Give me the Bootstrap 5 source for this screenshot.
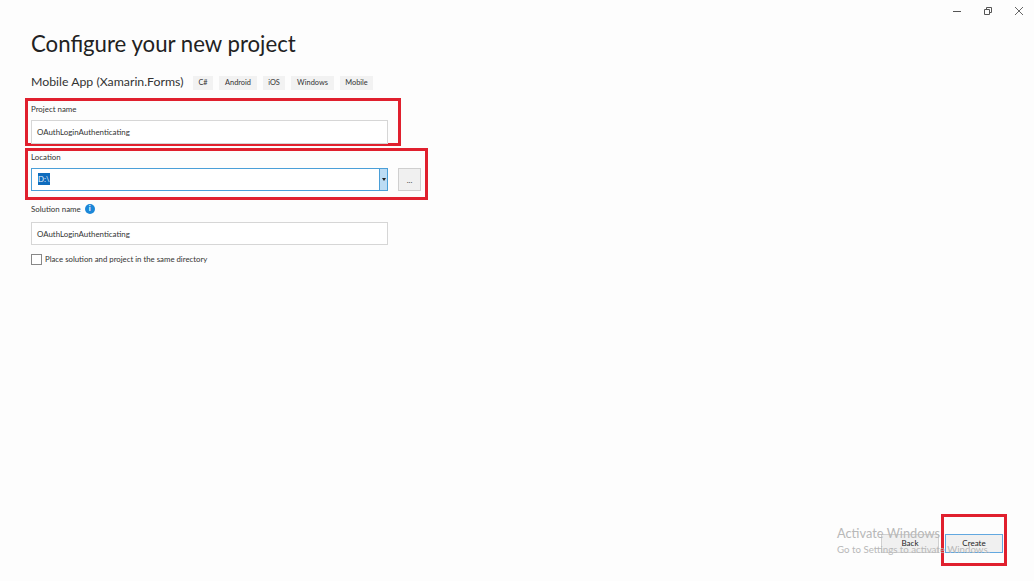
<!DOCTYPE html>
<html lang="en">
<head>
  <meta charset="UTF-8">
  <meta name="viewport" content="width=device-width, initial-scale=1.0">
  <title>Configure your new project</title>
  <link rel="stylesheet" href="https://cdn.jsdelivr.net/npm/bootstrap@5.3.0/dist/css/bootstrap.min.css">
  <style>
    html, body { height: 100%; overflow: hidden; }
    body { background: #fdfdfd; color: #222; font-family: "Lato", "Noto Sans", sans-serif; font-size: 7.9px; }
    .page-wrap { height: 581px; position: relative; }
    .win-controls { height: 22px; padding-right: 7px; gap: 15px; }
    .win-btn { width: 16px; height: 22px; }
    .main-col { padding-left: 25px; }
    .page-title { font-size: 22.2px; font-weight: 400; line-height: 30px; margin: 7px 0 0 6px; color: #222; }
    .template-row { margin: 14px 0 0 6px; height: 18px; padding-top: 1px; }
    .template-name { font-size: 12.3px; color: #333; width: 162px; white-space: nowrap; }
    .tag-chip { background: #f2f2f2; color: #333; font-size: 7.4px; height: 14px; line-height: 14px; text-align: center; margin-right: 6px; white-space: nowrap; }
    .chip-cs { width: 20px; }
    .chip-android { width: 38px; }
    .chip-ios { width: 22px; }
    .chip-windows { width: 43px; }
    .chip-mobile { width: 33px; }
    .red-box { border: 3px solid #e0202e; }
    .name-box { width: 376px; height: 48px; margin-top: 7px; padding: 1px 0 0 3px; }
    .loc-box { width: 403px; height: 52px; margin-top: 2px; padding: 0 0 0 3px; }
    .field-label { font-size: 7.9px; line-height: 14px; color: #333; }
    .vs-input { width: 357px; height: 23px; border: 1px solid #d6d6d6; background: #fff; font-size: 7.9px; line-height: 22px; padding-left: 5px; color: #333; }
    .name-box .field-label { margin-bottom: 4px; }
    .name-box .vs-input { height: 24px; line-height: 23px; }
    .loc-box .field-label { line-height: 12px; margin-bottom: 5px; }
    .loc-combo { width: 357px; height: 23px; border: 1px solid #4a9fd8; background: #fff; }
    .loc-text { padding-left: 6px; font-size: 7.9px; line-height: 21px; }
    .loc-sel { background: #0f6cbd; color: #e8f2fa; padding: 1px 0; line-height: 11px; }
    .loc-arrow { width: 8px; background: #bcdcf4; border-left: 1px solid #4a9fd8; }
    .loc-arrow span { border: 2px solid transparent; border-top: 3px solid #222; border-bottom: 0; }
    .browse-btn { width: 23px; height: 23px; margin-left: 10px; border: 1px solid #cfcfcf; background: #f0f0f0; font-size: 8px; color: #444; padding: 0; }
    .plain-field { padding-left: 31px; }
    .solution-label { margin-top: 1px; height: 16px; gap: 4px; margin-bottom: 5px; }
    .info-dot { width: 10px; height: 10px; border-radius: 50%; background: #1b87d8; color: #fff; font-size: 7.5px; line-height: 10px; font-weight: 700; text-align: center; }
    .check-row { margin-top: 8px; gap: 3px; font-size: 7.8px; color: #333; height: 12px; }
    .check-text { padding-top: 2px; }
    .vs-check { width: 11px; height: 11px; border: 1px solid #888; background: #fff; }
    .footer-row { position: absolute; right: 27px; bottom: 15px; align-items: flex-end; }
    .vs-btn { width: 58px; height: 19px; font-size: 8px; line-height: 17px; color: #222; background: #f0f0f0; border: 1px solid #d0d0d0; padding: 0; border-radius: 0; }
    .back-btn { margin-bottom: 13px; margin-right: 2px; }
    .create-box { width: 66px; height: 52px; padding: 17px 0 0 1px; }
    .create-btn { border-color: #62a8e0; width: 58px; }
    .activate-mark { position: absolute; left: 837px; top: 525px; color: #b8b8b8; pointer-events: none; white-space: nowrap; }
    .activate-head { font-size: 12.8px; line-height: 17px; }
    .activate-sub { font-size: 9.7px; line-height: 14px; }
  </style>
</head>
<body>
  <div class="page-wrap">
    <div class="d-flex justify-content-end win-controls">
      <div class="win-btn d-flex align-items-center justify-content-center">
        <svg width="10" height="10" viewBox="0 0 10 10"><path d="M1 5.5h8" stroke="#555" stroke-width="1"/></svg>
      </div>
      <div class="win-btn d-flex align-items-center justify-content-center">
        <svg width="10" height="10" viewBox="0 0 10 10"><path d="M1.5 3.5h5v5h-5zM3.5 3.5v-2h5v5h-2" fill="none" stroke="#555" stroke-width="1"/></svg>
      </div>
      <div class="win-btn d-flex align-items-center justify-content-center">
        <svg width="10" height="10" viewBox="0 0 10 10"><path d="M1 1l8 8M9 1l-8 8" stroke="#666" stroke-width="1"/></svg>
      </div>
    </div>

    <div class="main-col">
      <h1 class="page-title">Configure your new project</h1>

      <div class="template-row d-flex align-items-center">
        <div class="template-name">Mobile App (Xamarin.Forms)</div>
        <span class="tag-chip chip-cs">C#</span>
        <span class="tag-chip chip-android">Android</span>
        <span class="tag-chip chip-ios">iOS</span>
        <span class="tag-chip chip-windows">Windows</span>
        <span class="tag-chip chip-mobile">Mobile</span>
      </div>

      <div class="red-box name-box">
        <div class="field-label">Project name</div>
        <div class="vs-input">OAuthLoginAuthenticating</div>
      </div>

      <div class="red-box loc-box">
        <div class="field-label">Location</div>
        <div class="d-flex">
          <div class="loc-combo d-flex">
            <div class="loc-text flex-grow-1"><span class="loc-sel">D:\</span></div>
            <div class="loc-arrow d-flex align-items-center justify-content-center"><span></span></div>
          </div>
          <button type="button" class="browse-btn">...</button>
        </div>
      </div>
    </div>

    <div class="plain-field">
      <div class="solution-label d-flex align-items-center field-label">Solution name <span class="info-dot">i</span></div>
      <div class="vs-input">OAuthLoginAuthenticating</div>
      <div class="check-row d-flex align-items-center">
        <span class="vs-check"></span>
        <span class="check-text">Place solution and project in the same directory</span>
      </div>
    </div>

    <div class="footer-row d-flex">
      <button type="button" class="vs-btn back-btn">Back</button>
      <div class="red-box create-box">
        <button type="button" class="vs-btn create-btn">Create</button>
      </div>
    </div>

    <div class="activate-mark">
      <div class="activate-head">Activate Windows</div>
      <div class="activate-sub">Go to Settings to activate Windows.</div>
    </div>
  </div>
  <script src="https://cdn.jsdelivr.net/npm/bootstrap@5.3.0/dist/js/bootstrap.bundle.min.js"></script>
</body>
</html>
